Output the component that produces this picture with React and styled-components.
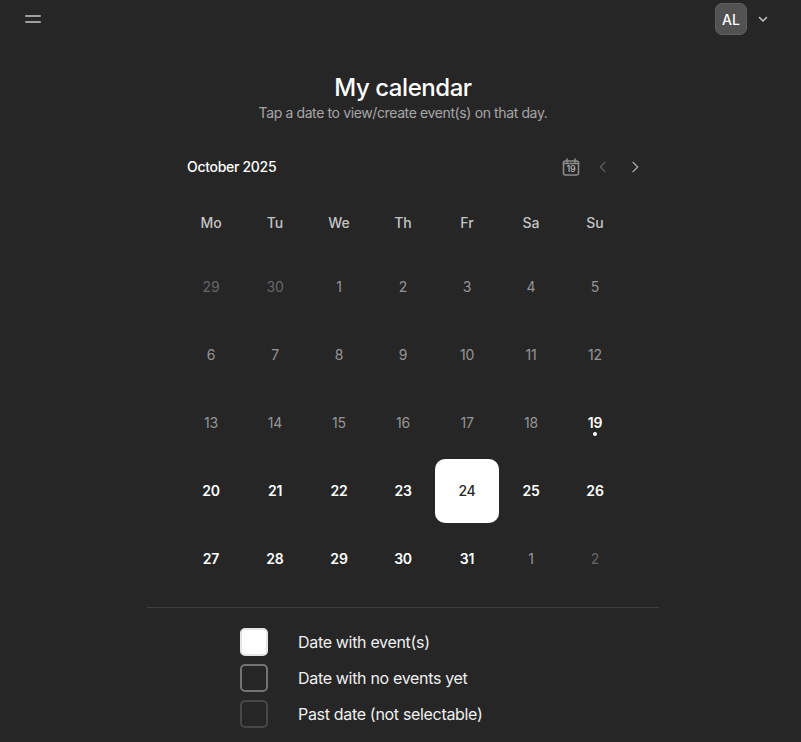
import React from "react";
import styled, { createGlobalStyle } from "styled-components";

const Global = createGlobalStyle`
  html, body { margin: 0; padding: 0; background: #262626; }
  body { font-family: Inter, "Liberation Sans", sans-serif; color: #fff; }
`;
const Page = styled.div`
  width: 801px; height: 742px; overflow: hidden; background: #262626;
  display: flex; flex-direction: column;
`;
const TopBar = styled.header`
  height: 38px; padding: 3px 32px 0 25px; box-sizing: border-box;
  display: flex; justify-content: space-between; align-items: flex-start;
`;
const Burger = styled.button`
  width: 16px; height: 8px; margin-top: 12px; padding: 0; border: 0; background: none;
  display: flex; flex-direction: column; justify-content: space-between;
`;
const BurgerLine = styled.span`
  display: block; height: 2px; background: #a0a0a0; border-radius: 1px;
`;
const UserMenu = styled.div`
  display: flex; align-items: center; gap: 10px;
`;
const Avatar = styled.div`
  width: 32px; height: 32px; border-radius: 7px; background: #525252;
  border: 1px solid #5e5e5e; box-sizing: border-box;
  display: flex; align-items: center; justify-content: center;
  font-size: 14px; font-weight: 500; color: #fff;
`;
const Icon = styled.svg`
  display: block; fill: none; stroke: ${p => p.$color}; stroke-width: ${p => p.$sw || 2};
  stroke-linecap: round; stroke-linejoin: round;
`;
const Main = styled.main`
  padding-left: 5px; display: flex; flex-direction: column; align-items: center;
`;
const Title = styled.h1`
  margin: 36px 0 0; font-size: 24px; line-height: 28px; font-weight: 500; letter-spacing: -0.45px; color: #fff;
`;
const Subtitle = styled.p`
  margin: 2px 0 0; font-size: 14px; line-height: 18px; font-weight: 400; letter-spacing: -0.38px; color: #a6a6a6;
`;
const Calendar = styled.section`
  width: 448px; margin-top: 24px;
`;
const CalHeader = styled.div`
  height: 40px; padding-left: 8px; display: flex; align-items: center; justify-content: space-between;
`;
const Month = styled.div`
  font-size: 14px; font-weight: 550; letter-spacing: -0.3px; color: #fff;
`;
const Nav = styled.div`
  display: flex; align-items: center; gap: 14px; margin: 1px -17px 0 0;
`;
const NavBtn = styled.button`
  width: 18px; height: 18px; padding: 0; border: 0; background: none; display: flex; align-items: center; justify-content: center;
`;
const TodayIcon = styled.div`
  position: relative; width: 18px; height: 18px;
`;
const TodayNum = styled.span`
  position: absolute; left: 0; right: 0; top: 6px; text-align: center; font-size: 9px; line-height: 10px; font-weight: 500; letter-spacing: -0.3px; color: #b8b8b8;
`;
const WeekRow = styled.div`
  display: grid; grid-template-columns: repeat(7, 64px); height: 32px; align-items: center;
  margin-top: 20px;
`;
const Week = styled.div`
  text-align: center; font-size: 14px; font-weight: 500; color: #c4c4c4;
`;
const Grid = styled.div`
  display: grid; grid-template-columns: repeat(7, 64px); grid-auto-rows: 64px; row-gap: 4px; margin-top: 17px;
`;
const Day = styled.div`
  position: relative; display: flex; align-items: center; justify-content: center; font-size: 14px;
  padding-bottom: 2px; box-sizing: border-box;
  border-radius: 10px; letter-spacing: -0.2px;
  ${p => p.$kind === "event" && "color:#fff;font-weight:600;"}
  ${p => p.$kind === "selected" && "color:#262626;background:#fff;font-weight:500;"}
  ${p => p.$kind === "past" && "color:#969696;"}
  ${p => p.$kind === "out" && "color:#666;"}
`;
const Dot = styled.span`
  position: absolute; left: 30px; top: 41px; width: 4px; height: 4px; border-radius: 50%; background: #fff;
`;
const Divider = styled.hr`
  width: 512px; height: 1px; border: 0; margin: 16px 0 0; background: #3f3f3f;
`;
const Legend = styled.ul`
  list-style: none; margin: 20px 0 0; padding: 0 0 0 93px; width: 512px; box-sizing: border-box;
  display: flex; flex-direction: column; gap: 8px;
`;
const LegendRow = styled.li`
  display: flex; align-items: center; gap: 30px; height: 28px; font-size: 16px; letter-spacing: -0.32px; color: #f0f0f0;
`;
const Swatch = styled.span`
  width: 28px; height: 28px; box-sizing: border-box; border-radius: 5px; border: 2px solid ${p => p.$border};
  background: ${p => p.$fill || "transparent"};
`;

const weeks = ["Mo","Tu","We","Th","Fr","Sa","Su"];
const days = [
  [29,"out"],[30,"out"],[1,"past"],[2,"past"],[3,"past"],[4,"past"],[5,"past"],
  [6,"past"],[7,"past"],[8,"past"],[9,"past"],[10,"past"],[11,"past"],[12,"past"],
  [13,"past"],[14,"past"],[15,"past"],[16,"past"],[17,"past"],[18,"past"],[19,"event",true],
  [20,"event"],[21,"event"],[22,"event"],[23,"event"],[24,"selected"],[25,"event"],[26,"event"],
  [27,"event"],[28,"event"],[29,"event"],[30,"event"],[31,"event"],[1,"past"],[2,"out"],
];

export default function App() {
  return (
    <Page>
      <Global />
      <TopBar>
        <Burger aria-label="Menu"><BurgerLine /><BurgerLine /></Burger>
        <UserMenu>
          <Avatar>AL</Avatar>
          <Icon $color="#c8c8c8" width="12" height="12" viewBox="0 0 24 24" $sw={3}><path d="M5 9l7 7 7-7" /></Icon>
        </UserMenu>
      </TopBar>
      <Main>
        <Title>My calendar</Title>
        <Subtitle>Tap a date to view/create event(s) on that day.</Subtitle>
        <Calendar>
          <CalHeader>
            <Month>October 2025</Month>
            <Nav>
              <TodayIcon>
                <Icon $color="#8c8c8c" $sw={1.6} width="18" height="18" viewBox="0 0 18 18">
                  <rect x="1.5" y="3" width="15" height="14" rx="2" />
                  <path d="M5 1v3M13 1v3M1.5 5.5h15" />
                </Icon>
                <TodayNum>19</TodayNum>
              </TodayIcon>
              <NavBtn><Icon $color="#5e5e5e" width="16" height="16" viewBox="0 0 24 24"><path d="M15 5l-7 7 7 7" /></Icon></NavBtn>
              <NavBtn><Icon $color="#a3a3a3" width="16" height="16" viewBox="0 0 24 24"><path d="M9 5l7 7-7 7" /></Icon></NavBtn>
            </Nav>
          </CalHeader>
          <WeekRow>{weeks.map(w => <Week key={w}>{w}</Week>)}</WeekRow>
          <Grid>
            {days.map(([n, kind, dot], i) => (
              <Day key={i} $kind={kind}>{n}{dot && <Dot />}</Day>
            ))}
          </Grid>
        </Calendar>
        <Divider />
        <Legend>
          <LegendRow><Swatch $border="#e5e5e5" $fill="#fff" />Date with event(s)</LegendRow>
          <LegendRow><Swatch $border="#737373" />Date with no events yet</LegendRow>
          <LegendRow><Swatch $border="#474747" />Past date (not selectable)</LegendRow>
        </Legend>
      </Main>
    </Page>
  );
}
